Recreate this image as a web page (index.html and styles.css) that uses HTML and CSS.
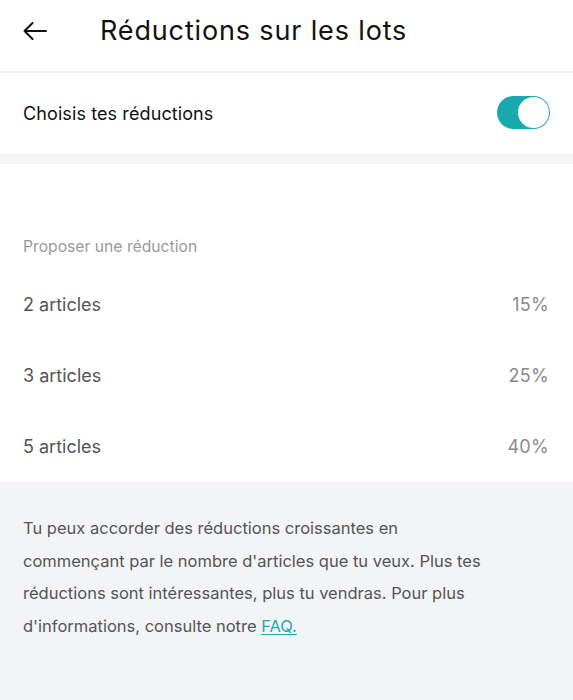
FILE: index.html
```html
<!DOCTYPE html>
<html lang="fr">
<head>
<meta charset="utf-8">
<title>Réductions sur les lots</title>
<link rel="stylesheet" href="styles.css">
</head>
<body>
<header class="topbar">
  <button class="back" aria-label="Retour">
    <svg width="24" height="18" viewBox="0 0 24 18" fill="none" stroke="#111" stroke-width="2" stroke-linecap="round" stroke-linejoin="round"><path d="M23 9H1.5M9.5 1L1.5 9l8 8"/></svg>
  </button>
  <h1 class="title">Réductions sur les lots</h1>
</header>
<section class="toggle-row">
  <span class="toggle-label">Choisis tes réductions</span>
  <span class="switch"><span class="knob"></span></span>
</section>
<div class="spacer"></div>
<section class="discounts">
  <div class="caption">Proposer une réduction</div>
  <div class="row"><span>2 articles</span><span class="pct">15%</span></div>
  <div class="row"><span>3 articles</span><span class="pct">25%</span></div>
  <div class="row"><span>5 articles</span><span class="pct">40%</span></div>
</section>
<section class="note">
  <p>Tu peux accorder des réductions croissantes en commençant par le nombre d'articles que tu veux. Plus tes réductions sont intéressantes, plus tu vendras. Pour plus d'informations, consulte notre <a href="#">FAQ.</a></p>
</section>
</body>
</html>
```
FILE: styles.css
```css
* { box-sizing: border-box; }
html, body { margin: 0; padding: 0; }
body {
  font-family: Inter, "Noto Sans", sans-serif;
  background: #f3f4f6;
  width: 573px;
  min-height: 700px;
}
.topbar {
  height: 73px;
  background: #fff;
  display: flex;
  align-items: center;
  padding-left: 23px;
  border-bottom: 2px solid #eeeff1;
}
.back {
  border: 0;
  background: none;
  padding: 0;
  width: 24px;
  height: 18px;
  display: flex;
  margin-top: -10px;
}
.title {
  margin: -10px 0 0 53px;
  font-size: 27px;
  font-weight: 400;
  color: #111;
  letter-spacing: 0.85px;
}
.toggle-row {
  height: 81px;
  background: #fff;
  display: flex;
  align-items: center;
  justify-content: space-between;
  padding: 0 23px;
}
.toggle-label {
  font-size: 18px;
  color: #111;
  letter-spacing: 0.1px;
  margin-top: -1px;
}
.switch {
  width: 53px;
  height: 33px;
  border-radius: 17px;
  background: #19aaad;
  display: flex;
  align-items: center;
  justify-content: flex-end;
  padding: 1px;
  margin-top: -2px;
}
.knob {
  width: 31px;
  height: 31px;
  border-radius: 50%;
  background: #fff;
}
.spacer { height: 10px; }
.discounts {
  background: #fff;
  padding: 73px 24px 0 23px;
}
.caption {
  font-size: 15.7px;
  color: #9a9a9a;
  line-height: 20px;
  margin-bottom: 12px;
}
.row {
  height: 71px;
  display: flex;
  align-items: center;
  justify-content: space-between;
  font-size: 18px;
  color: #555;
}
.pct { color: #8a8a8a; letter-spacing: 0.3px; }
.note {
  padding: 30px 84px 0 23px;
}
.note p {
  margin: 0;
  font-size: 16.5px;
  line-height: 32.7px;
  color: #555;
}
.note a {
  color: #19aaad;
  text-decoration: underline;
  text-underline-offset: 2px;
}
```
